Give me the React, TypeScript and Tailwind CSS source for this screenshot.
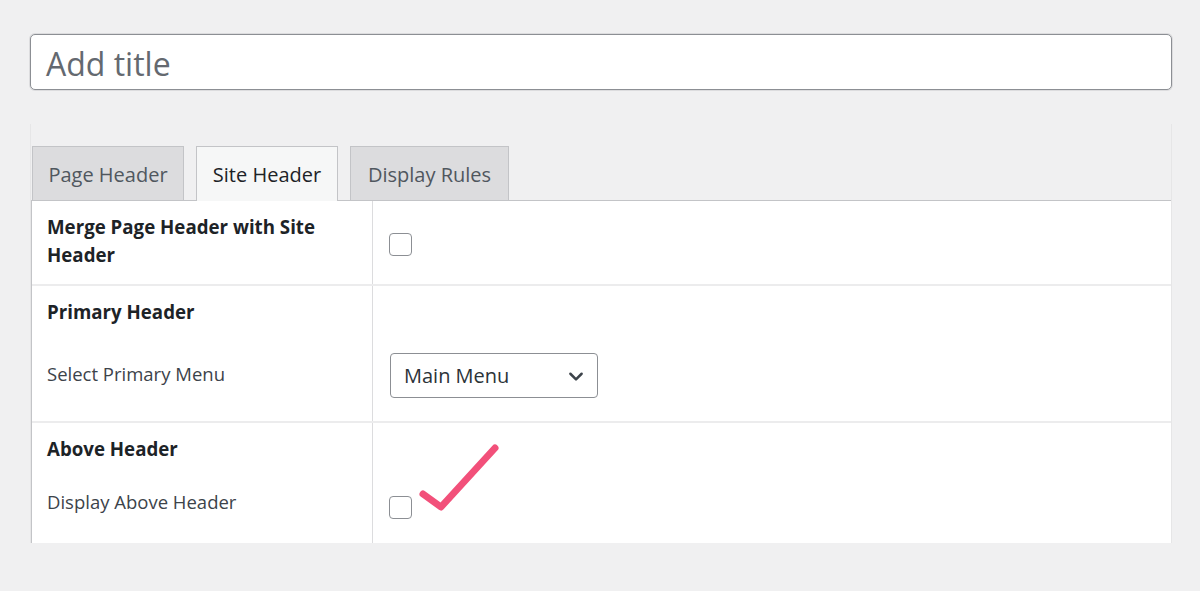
export default function App() {
  return (
    <div
      className="min-h-[591px] w-[1200px] bg-[#f0f0f1] pl-[30px] pr-[28px] pt-[34px]"
      style={{ fontFamily: '"Open Sans", "Noto Sans", sans-serif' }}
    >
      {/* Title */}
      <div className="flex h-[56px] items-center rounded-[5px] border border-[#8c8f94] bg-white pl-[15px] pt-[3px] shadow-[0_0_0_1px_#dcdcde]">
        <span className="text-[32px] text-[#646970]">Add title</span>
      </div>

      {/* Metabox */}
      <div className="mt-[34px] border-x border-[#e6e6e7] pt-[22px]">
        <div className="flex items-end gap-[12px] pl-px">
          <div className="flex h-[54px] w-[152px] items-center justify-center border border-b-0 border-[#c3c4c7] bg-[#dcdcde] pt-[2px] text-[20px] text-[#50575e]">
            Page Header
          </div>
          <div className="-mb-px flex h-[55px] w-[142px] items-center justify-center border border-b-0 border-[#c3c4c7] bg-[#f6f7f7] pt-[1px] text-[20px] text-[#1d2327]">
            Site Header
          </div>
          <div className="flex h-[54px] w-[159px] items-center justify-center border border-b-0 border-[#c3c4c7] bg-[#dcdcde] pt-[2px] text-[20px] text-[#50575e]">
            Display Rules
          </div>
        </div>

        <div className="border-t border-l border-[#c3c4c7] bg-white">
          {/* Row 1 */}
          <div className="flex h-[85px] border-b-2 border-[#ececed]">
            <div className="w-[341px] border-r border-[#dcdcde] pl-[15px] pt-[12px] text-[18.7px] font-bold leading-[28px] text-[#1d2327]">
              Merge Page Header with Site Header
            </div>
            <div className="flex flex-1 items-center pl-[16px] pt-[3px]">
              <Checkbox />
            </div>
          </div>

          {/* Row 2 */}
          <div className="flex h-[137px] border-b-2 border-[#ececed]">
            <div className="w-[341px] border-r border-[#dcdcde] pl-[15px] pt-[12px]">
              <div className="text-[18.7px] font-bold leading-[28px] text-[#1d2327]">Primary Header</div>
              <div className="mt-[34px] text-[18.5px] leading-[28px] text-[#3c434a]">Select Primary Menu</div>
            </div>
            <div className="flex-1 pl-[17px] pt-[67px]">
              <div className="flex h-[45px] w-[208px] items-center justify-between rounded-[4px] border border-[#8c8f94] pl-[13px] pr-[12px]">
                <span className="text-[20px] text-[#2c3338]">Main Menu</span>
                <svg width="18" height="18" viewBox="0 0 16 16" fill="none">
                  <path d="M3 6l5 5 5-5" stroke="#3c434a" strokeWidth="2.2" strokeLinecap="round" strokeLinejoin="round" />
                </svg>
              </div>
            </div>
          </div>

          {/* Row 3 */}
          <div className="flex h-[120px]">
            <div className="w-[341px] border-r border-[#dcdcde] pl-[15px] pt-[12px]">
              <div className="text-[18.7px] font-bold leading-[28px] text-[#1d2327]">Above Header</div>
              <div className="mt-[25px] text-[18.5px] leading-[28px] text-[#3c434a]">Display Above Header</div>
            </div>
            <div className="relative flex-1 pl-[16px] pt-[73px]">
              <Checkbox />
              <svg
                className="absolute left-[44px] top-[20px]"
                width="84"
                height="76"
                viewBox="0 0 84 76"
              >
                <path
                  d="M6 51 L24 64 L78 5"
                  fill="none"
                  stroke="#f2507a"
                  strokeWidth="7"
                  strokeLinecap="round"
                  strokeLinejoin="round"
                />
              </svg>
            </div>
          </div>
        </div>
      </div>
    </div>
  );
}

function Checkbox() {
  return <div className="h-[23px] w-[23px] rounded-[4px] border border-[#8c8f94] bg-white" />;
}
